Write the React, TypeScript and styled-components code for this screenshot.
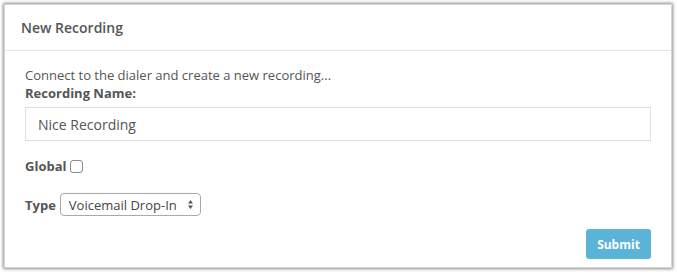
import styled, { createGlobalStyle } from "styled-components";

const GlobalStyle = createGlobalStyle`
  html, body {
    margin: 0;
    padding: 0;
    background: #ffffff;
  }
  body {
    font-family: "Open Sans", "Liberation Sans", sans-serif;
    color: #555555;
  }
`;

const Page = styled.div`
  padding: 4px 5px 9px 4px;
`;

const Panel = styled.div`
  border: 1px solid #d6d6d6;
  background: #ffffff;
  box-shadow: 0 0 3px 1px rgba(0, 0, 0, 0.45);
`;

const PanelHeader = styled.div`
  height: 45px;
  padding: 0 16px;
  display: flex;
  align-items: center;
  border-bottom: 1px solid #e5e5e5;
  font-size: 14px;
  font-weight: 600;
  color: #555555;
`;

const PanelBody = styled.div`
  padding: 15px 20px 8px 20px;
  display: flex;
  flex-direction: column;
  font-size: 13px;
  line-height: 18px;
`;

const Intro = styled.div`
  color: #555555;
`;

const Label = styled.label`
  font-weight: 700;
  color: #555555;
`;

const TextInput = styled.input`
  margin-top: 5px;
  height: 34px;
  box-sizing: border-box;
  border: 1px solid #e0e0e0;
  padding: 0 12px;
  font-family: inherit;
  font-size: 14px;
  color: #555555;
  outline: none;
`;

const InlineRow = styled.div<{ $top: number }>`
  display: flex;
  align-items: center;
  gap: 4px;
  margin-top: ${(p) => p.$top}px;
`;

const Check = styled.span`
  width: 11px;
  height: 11px;
  border: 1px solid #8a8a8a;
  border-radius: 3px;
  background: #ffffff;
`;

const Select = styled.div`
  display: flex;
  align-items: center;
  justify-content: space-between;
  width: 141px;
  height: 23px;
  box-sizing: border-box;
  border: 1px solid #a9a9a9;
  border-radius: 4px;
  padding: 0 6px 0 8px;
  font-size: 13px;
  color: #444444;
`;

const Footer = styled.div`
  display: flex;
  justify-content: flex-end;
  margin-top: 13px;
`;

const Button = styled.button`
  width: 65px;
  height: 30px;
  border: none;
  border-radius: 3px;
  background: #5bb4d8;
  color: #ffffff;
  font-family: inherit;
  font-size: 12px;
  font-weight: 700;
`;

function Arrows() {
  return (
    <svg width="7" height="11" viewBox="0 0 7 11">
      <path d="M3.5 1 L6 4.5 L1 4.5 Z" fill="#555" />
      <path d="M3.5 10 L6 6.5 L1 6.5 Z" fill="#555" />
    </svg>
  );
}

export default function App() {
  return (
    <>
      <GlobalStyle />
      <Page>
        <Panel>
          <PanelHeader>New Recording</PanelHeader>
          <PanelBody>
            <Intro>Connect to the dialer and create a new recording...</Intro>
            <Label>Recording Name:</Label>
            <TextInput defaultValue="Nice Recording" />
            <InlineRow $top={16}>
              <Label>Global</Label>
              <Check />
            </InlineRow>
            <InlineRow $top={18}>
              <Label>Type</Label>
              <Select>
                <span>Voicemail Drop-In</span>
                <Arrows />
              </Select>
            </InlineRow>
            <Footer>
              <Button>Submit</Button>
            </Footer>
          </PanelBody>
        </Panel>
      </Page>
    </>
  );
}
